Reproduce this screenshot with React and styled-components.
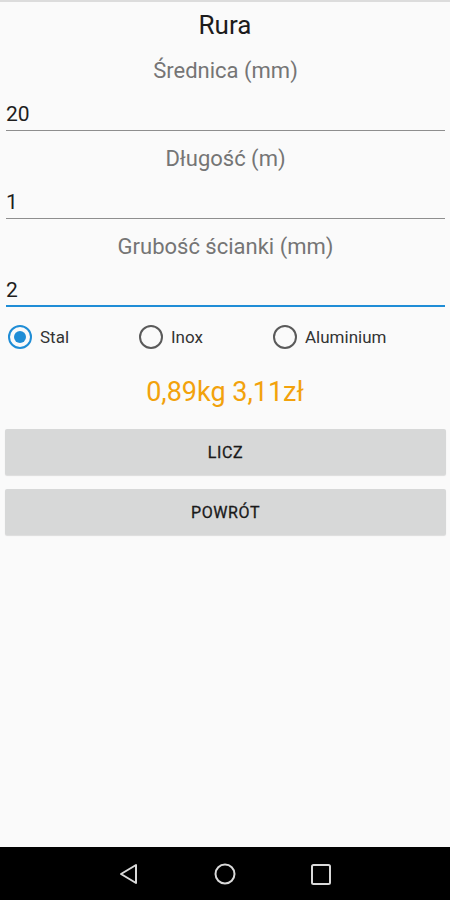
import React, { useState } from "react";
import styled, { createGlobalStyle } from "styled-components";

const GlobalStyle = createGlobalStyle`
  html, body {
    margin: 0;
    padding: 0;
    background: #fafafa;
  }
  body {
    font-family: Roboto, "Noto Sans", "Liberation Sans", sans-serif;
  }
`;

const Screen = styled.div`
  width: 450px;
  height: 900px;
  display: flex;
  flex-direction: column;
  background: #fafafa;
  border-top: 2px solid #dcdcdc;
  box-sizing: border-box;
  overflow: hidden;
`;

const Content = styled.main`
  flex: 1;
  display: flex;
  flex-direction: column;
`;

const Title = styled.h1`
  margin: 7px 0 0;
  font-size: 26px;
  font-weight: 400;
  line-height: 32px;
  text-align: center;
  color: #1c1c1c;
`;

const Field = styled.div`
  display: flex;
  flex-direction: column;
  padding: 0 5px 0 6px;
  margin-top: ${(p) => p.$top}px;
`;

const Label = styled.label`
  font-size: 22px;
  line-height: 24px;
  color: #757575;
  text-align: center;
`;

const Input = styled.input`
  font-family: inherit;
  font-size: 21px;
  color: #1e1e1e;
  line-height: 26px;
  height: 26px;
  padding: 18px 0 ${(p) => (p.$focused ? 2 : 3)}px;
  margin: 0;
  border: none;
  border-bottom: ${(p) => (p.$focused ? "2px solid #1f8dd6" : "1px solid #8e8e8e")};
  background: transparent;
  outline: none;
  caret-color: #1f8dd6;
`;

const RadioRow = styled.div`
  display: grid;
  grid-template-columns: 131px 134px 1fr;
  align-items: center;
  height: 40px;
  margin-top: 10px;
  padding-left: 8px;
`;

const RadioOption = styled.label`
  display: flex;
  align-items: center;
  gap: 8px;
  font-size: 17px;
  color: #333;
  cursor: pointer;
`;

const Circle = styled.span`
  width: 24px;
  height: 24px;
  box-sizing: border-box;
  border-radius: 50%;
  border: 2px solid ${(p) => (p.$checked ? "#1f8dd6" : "#5a5a5a")};
  display: flex;
  align-items: center;
  justify-content: center;

  &::after {
    content: "";
    width: 12px;
    height: 12px;
    border-radius: 50%;
    background: ${(p) => (p.$checked ? "#1f8dd6" : "transparent")};
  }
`;

const Result = styled.div`
  margin-top: 19px;
  font-size: 27px;
  line-height: 32px;
  text-align: center;
  color: #f2a20c;
`;

const Buttons = styled.div`
  display: flex;
  flex-direction: column;
  gap: 14px;
  margin: 21px 4px 0 5px;
`;

const Button = styled.button`
  height: 46px;
  border: none;
  border-radius: 2px;
  background: #d7d8d8;
  box-shadow: 0 1px 1px rgba(0, 0, 0, 0.12);
  font-family: inherit;
  font-size: 16px;
  font-weight: 400;
  letter-spacing: 0.6px;
  color: #1a1a1a;
  -webkit-text-stroke: 0.3px #1a1a1a;
  text-transform: uppercase;
  cursor: pointer;
`;

const NavBar = styled.nav`
  height: 53px;
  background: #000;
  display: flex;
  align-items: center;
  justify-content: center;
  gap: 72px;
`;

const NavIcon = styled.svg`
  width: 24px;
  height: 24px;
  fill: none;
  stroke: #d9d9d9;
  stroke-width: 2;
`;

const materials = ["Stal", "Inox", "Aluminium"];

export default function App() {
  const [material, setMaterial] = useState("Stal");

  return (
    <Screen>
      <GlobalStyle />
      <Content>
        <Title>Rura</Title>

        <Field $top={18}>
          <Label>Średnica (mm)</Label>
          <Input defaultValue="20" />
        </Field>

        <Field $top={16}>
          <Label>Długość (m)</Label>
          <Input defaultValue="1" />
        </Field>

        <Field $top={16}>
          <Label>Grubość ścianki (mm)</Label>
          <Input defaultValue="2" $focused />
        </Field>

        <RadioRow>
          {materials.map((m) => (
            <RadioOption key={m} onClick={() => setMaterial(m)}>
              <Circle $checked={material === m} />
              {m}
            </RadioOption>
          ))}
        </RadioRow>

        <Result>0,89kg 3,11zł</Result>

        <Buttons>
          <Button>Licz</Button>
          <Button>Powrót</Button>
        </Buttons>
      </Content>

      <NavBar>
        <NavIcon viewBox="0 0 24 24">
          <path d="M19 3 L19 21 L4 12 Z" strokeLinejoin="round" />
        </NavIcon>
        <NavIcon viewBox="0 0 24 24">
          <circle cx="12" cy="12" r="9.5" />
        </NavIcon>
        <NavIcon viewBox="0 0 24 24">
          <rect x="3" y="3" width="18" height="19" rx="1.5" />
        </NavIcon>
      </NavBar>
    </Screen>
  );
}
